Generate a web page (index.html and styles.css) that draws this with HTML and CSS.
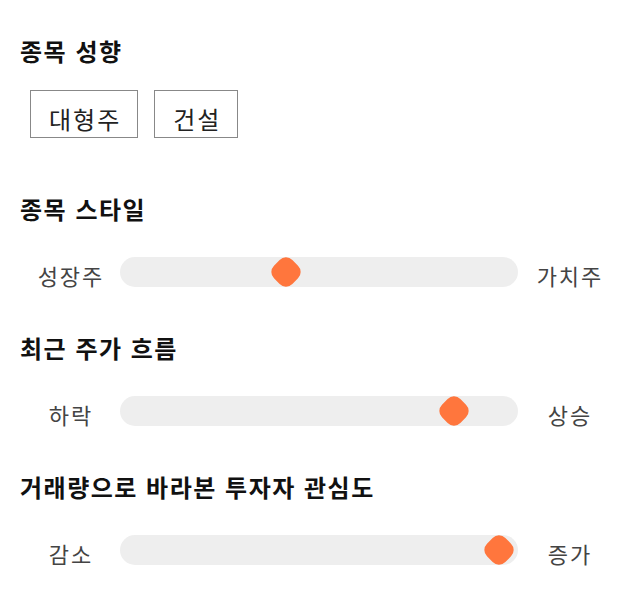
FILE: index.html
```html
<!DOCTYPE html>
<html lang="ko">

<head>
    <meta charset="UTF-8">
    <meta name="viewport" content="width=device-width, initial-scale=1.0">

    <link rel="stylesheet" href="styles.css">
</head>

<body>
    <div class="container">
        <div class="section section-tags">
            <h2 class="title">종목 성향</h2>
            <div class="tags">
                <span class="tag">대형주</span>
                <span class="tag">건설</span>
            </div>
        </div>

        <div class="section">
            <h2 class="title">종목 스타일</h2>
            <div class="slider-row">
                <span class="label">성장주</span>
                <div class="track">
                    <span class="thumb" style="--pos: 0.41"></span>
                </div>
                <span class="label">가치주</span>
            </div>
        </div>

        <div class="section">
            <h2 class="title">최근 주가 흐름</h2>
            <div class="slider-row">
                <span class="label">하락</span>
                <div class="track">
                    <span class="thumb" style="--pos: 0.866"></span>
                </div>
                <span class="label">상승</span>
            </div>
        </div>

        <div class="section">
            <h2 class="title">거래량으로 바라본 투자자 관심도</h2>
            <div class="slider-row">
                <span class="label">감소</span>
                <div class="track">
                    <span class="thumb" style="--pos: 0.988"></span>
                </div>
                <span class="label">증가</span>
            </div>
        </div>
    </div>
</body>

</html>
```

FILE: styles.css
```css
* {
    margin: 0;
    padding: 0;
    box-sizing: border-box;
}

body {
    font-family: 'Noto Sans CJK KR', 'Noto Sans', sans-serif;
    background: #fff;
    color: #111;
}

.container {
    padding: 34px 20px 40px 20px;
    width: 620px;
}

.section + .section {
    margin-top: 44px;
}

.section-tags {
    padding-bottom: 10px;
}

.title {
    font-size: 24px;
    font-weight: 700;
    line-height: 34px;
    letter-spacing: 1.5px;
    color: #111;
}

.tags {
    display: flex;
    gap: 16px;
    margin: 22px 0 0 10px;
}

.tag {
    display: block;
    border: 1px solid #888;
    padding: 10px 16px 0 18px;
    font-size: 24px;
    line-height: 36px;
    letter-spacing: 2px;
    color: #222;
}

.slider-row {
    display: grid;
    grid-template-columns: 100px 398px 102px;
    align-items: center;
    margin-top: 31px;
}

.label {
    text-align: center;
    font-size: 22px;
    line-height: 30px;
    letter-spacing: 2px;
    text-indent: 2px;
    padding-top: 3px;
    margin-bottom: -3px;
    color: #444;
}

.track {
    position: relative;
    height: 30px;
    border-radius: 15px;
    background: #eeeeee;
}

.thumb {
    position: absolute;
    top: 2px;
    left: calc(1.5px + (100% - 29px) * var(--pos));
    width: 26px;
    height: 26px;
    border-radius: 9px;
    background: #ff763d;
    transform: rotate(45deg);
}
```
